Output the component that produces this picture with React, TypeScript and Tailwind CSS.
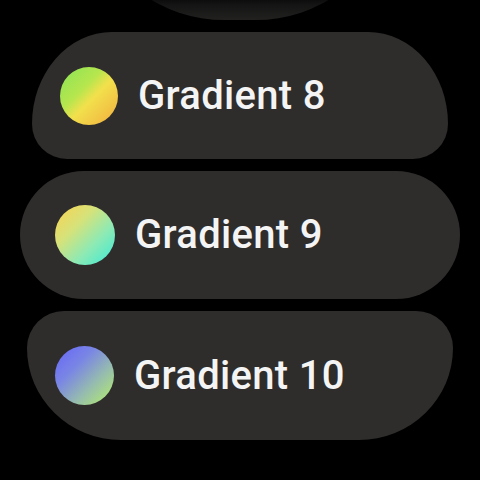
import React from "react";

type Item = {
  label: string;
  swatch: string;
  shape: string; // size + corner radii; edge items get squeezed by the round screen
  dot: string;
};

const items: Item[] = [
  {
    label: "Gradient 8",
    swatch: "bg-[linear-gradient(135deg,#88e456_0%,#b6e64e_38%,#f2e04c_55%,#f2ac3e_100%)]",
    shape:
      "w-[416px] h-[127px] rounded-tl-[80px_92px] rounded-tr-[80px_92px] rounded-b-[35px] pl-[28px]",
    dot: "w-[58px] h-[58px]",
  },
  {
    label: "Gradient 9",
    swatch: "bg-[linear-gradient(135deg,#fcd24e_0%,#d6e27a_35%,#8eeab4_65%,#38ead8_100%)]",
    shape: "w-[440px] h-[128px] rounded-full pl-[35px]",
    dot: "w-[60px] h-[60px]",
  },
  {
    label: "Gradient 10",
    swatch: "bg-[linear-gradient(135deg,#6464fa_0%,#7a86e4_35%,#96bcae_65%,#b6f266_100%)]",
    shape:
      "w-[426px] h-[129px] rounded-t-[37px] rounded-bl-[94px_92px] rounded-br-[94px_92px] pl-[28px]",
    dot: "w-[59px] h-[59px]",
  },
];

const Chip = ({ label, swatch, shape, dot }: Item) => (
  <div className={`shrink-0 bg-[#2f2d2c] flex items-center gap-[20px] ${shape}`}>
    <div className={`shrink-0 rounded-full ${dot} ${swatch}`} />
    <span className="text-[40px] leading-none font-medium text-[#f4f4f4] font-['Roboto',sans-serif] tracking-[0.3px]">
      {label}
    </span>
  </div>
);

export default function App() {
  return (
    <div className="relative w-[480px] h-[480px] bg-black overflow-hidden">
      <div className="w-[480px] h-[480px] flex flex-col items-center gap-[12px]">
        {/* previous item, mostly scrolled off the top */}
        <div className="shrink-0 w-[270px] h-[128px] rounded-bl-[120px_96px] rounded-br-[120px_96px] -mt-[108px] bg-[linear-gradient(180deg,#000_78%,#141414_88%,#222120_100%)]" />
        {items.map((it) => (
          <Chip key={it.label} {...it} />
        ))}
      </div>
    </div>
  );
}
